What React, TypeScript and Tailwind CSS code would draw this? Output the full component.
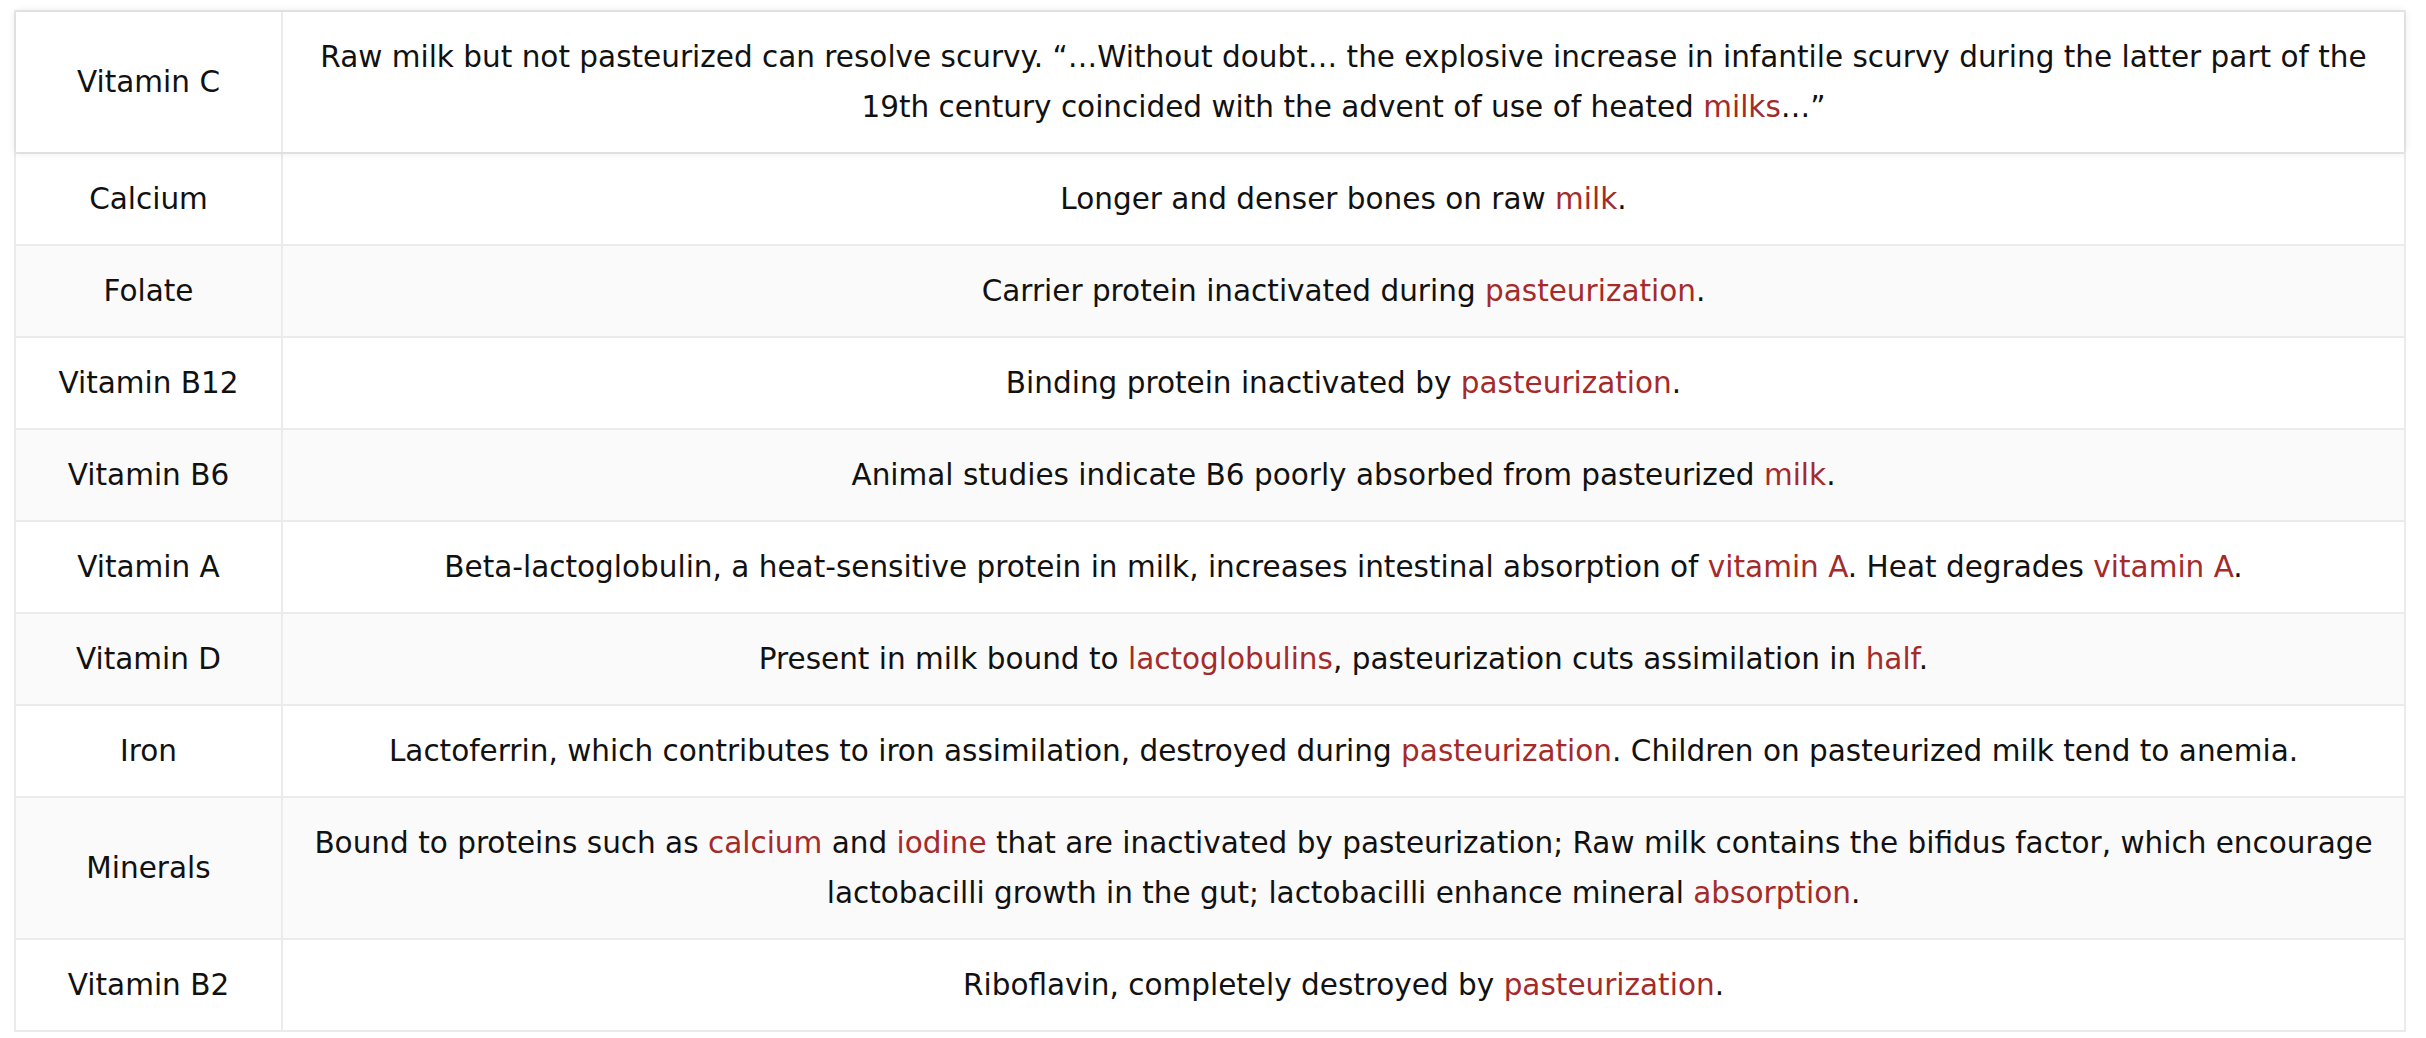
import React from "react";

type Part = string | { red: string } | { br: true };

type Row = {
  name: string;
  parts: Part[];
};

const rows: Row[] = [
  {
    name: "Vitamin C",
    parts: [
      "Raw milk but not pasteurized can resolve scurvy. \u201c\u2026Without doubt\u2026 the explosive increase in infantile scurvy during the latter part of the",
      { br: true },
      "19th century coincided with the advent of use of heated ",
      { red: "milks" },
      "\u2026\u201d",
    ],
  },
  { name: "Calcium", parts: ["Longer and denser bones on raw ", { red: "milk" }, "."] },
  { name: "Folate", parts: ["Carrier protein inactivated during ", { red: "pasteurization" }, "."] },
  { name: "Vitamin B12", parts: ["Binding protein inactivated by ", { red: "pasteurization" }, "."] },
  {
    name: "Vitamin B6",
    parts: ["Animal studies indicate B6 poorly absorbed from pasteurized ", { red: "milk" }, "."],
  },
  {
    name: "Vitamin A",
    parts: [
      "Beta-lactoglobulin, a heat-sensitive protein in milk, increases intestinal absorption of ",
      { red: "vitamin A" },
      ". Heat degrades ",
      { red: "vitamin A" },
      ".",
    ],
  },
  {
    name: "Vitamin D",
    parts: [
      "Present in milk bound to ",
      { red: "lactoglobulins" },
      ", pasteurization cuts assimilation in ",
      { red: "half" },
      ".",
    ],
  },
  {
    name: "Iron",
    parts: [
      "Lactoferrin, which contributes to iron assimilation, destroyed during ",
      { red: "pasteurization" },
      ". Children on pasteurized milk tend to anemia.",
    ],
  },
  {
    name: "Minerals",
    parts: [
      "Bound to proteins such as ",
      { red: "calcium" },
      " and ",
      { red: "iodine" },
      " that are inactivated by pasteurization; Raw milk contains the bifidus factor, which encourage",
      { br: true },
      "lactobacilli growth in the gut; lactobacilli enhance mineral ",
      { red: "absorption" },
      ".",
    ],
  },
  { name: "Vitamin B2", parts: ["Riboflavin, completely destroyed by ", { red: "pasteurization" }, "."] },
];

const Text = ({ parts }: { parts: Part[] }) => (
  <>
    {parts.map((p, i) => {
      if (typeof p === "string") return <React.Fragment key={i}>{p}</React.Fragment>;
      if ("br" in p) return <br key={i} />;
      return (
        <span key={i} className="text-[#a52a2a]">
          {p.red}
        </span>
      );
    })}
  </>
);

const Cells = ({ row }: { row: Row }) => (
  <>
    <td className="w-[267px] border-2 border-[#ebebeb] px-5 py-5 text-center align-middle">
      {row.name}
    </td>
    <td className="whitespace-nowrap border-2 border-[#ebebeb] px-5 py-5 text-center align-middle">
      <Text parts={row.parts} />
    </td>
  </>
);

const App = () => {
  const [head, ...body] = rows;

  return (
    <div className="min-h-screen bg-white pl-[14px] pt-[10px] font-['DejaVu_Sans',sans-serif] text-[29.5px] leading-[50px] text-[#111]">
      <table className="w-[2392px] table-fixed border-collapse">
        <thead>
          <tr className="relative bg-white shadow-[0_0_8px_rgba(0,0,0,0.09)]">
            <Cells row={head} />
          </tr>
        </thead>
        <tbody>
          {body.map((row, i) => (
            <tr key={row.name} className={i % 2 === 1 ? "bg-[#fafafa]" : "bg-white"}>
              <Cells row={row} />
            </tr>
          ))}
        </tbody>
      </table>
    </div>
  );
};

export default App;
